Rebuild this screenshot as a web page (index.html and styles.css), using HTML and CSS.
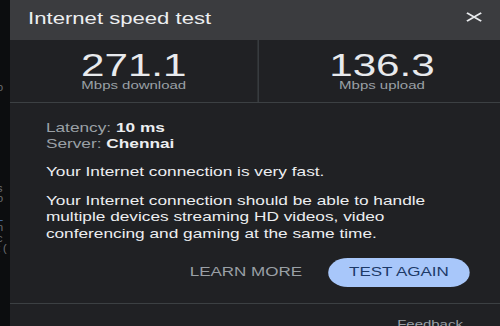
FILE: index.html
```html
<!DOCTYPE html>
<html lang="en">
<head>
<meta charset="utf-8">
<title>Internet speed test</title>
<link rel="stylesheet" href="styles.css">
</head>
<body>
<div class="page">
  <div class="backdrop">
    <span class="frag g1">o</span>
    <span class="frag g2">s</span>
    <span class="frag">o</span>
    <span class="frag link g3">L</span>
    <span class="frag">n</span>
    <span class="frag">c</span>
    <span class="frag">t (</span>
  </div>
  <section class="dialog">
    <header class="dlg-head">
      <h1 class="title">Internet speed test</h1>
      <button class="close" aria-label="Close">
        <svg viewBox="0 0 12.5 10" width="12.5" height="10" preserveAspectRatio="none"><path d="M1 0.8 L11.5 9.2 M11.5 0.8 L1 9.2" stroke="#e8eaed" stroke-width="1.5" fill="none"/></svg>
      </button>
    </header>
    <div class="stats">
      <div class="stat">
        <div class="num">271.1</div>
        <div class="unit">Mbps download</div>
      </div>
      <div class="stat">
        <div class="num">136.3</div>
        <div class="unit">Mbps upload</div>
      </div>
    </div>
    <div class="content">
      <div class="meta">
        <div><span class="k">Latency:</span> <b>10 ms</b></div>
        <div><span class="k">Server:</span> <b>Chennai</b></div>
      </div>
      <p class="verdict">Your Internet connection is very fast.</p>
      <p class="detail">Your Internet connection should be able to handle multiple devices streaming HD videos, video conferencing and gaming at the same time.</p>
      <div class="actions">
        <button class="btn-text">LEARN MORE</button>
        <button class="btn-pill">TEST AGAIN</button>
      </div>
    </div>
    <footer class="foot"><span class="feedback">Feedback</span></footer>
  </section>
</div>
</body>
</html>
```
FILE: styles.css
```css
html, body {
  margin: 0;
  height: 326px;
  overflow: hidden;
  background: #0c0d0f;
}
body {
  font-family: "Liberation Sans", Arial, sans-serif;
}
.page {
  display: flex;
  height: 326px;
}
.backdrop {
  width: 10px;
  flex: none;
  overflow: hidden;
  display: flex;
  flex-direction: column;
}
.frag {
  display: block;
  font-size: 11px;
  line-height: 10.5px;
  margin-left: -3px;
  color: #6c7075;
}
.frag.g1 { margin-top: 82px; }
.frag.g2 { margin-top: 90px; }
.frag.g3 { margin-top: 8px; }
.frag.link { color: #4f7cbf; }

.dialog {
  flex: none;
  width: 364px;
  height: 326px;
  overflow: hidden;
  background: #202124;
  transform: scaleX(1.36);
  transform-origin: 0 0;
}
.dlg-head {
  height: 40px;
  box-sizing: border-box;
  background: #3b3c3f;
  display: flex;
  align-items: flex-start;
  justify-content: space-between;
  padding: 0 17px 0 13.3px;
}
.title {
  margin: 0;
  padding-top: 8px;
  font-size: 16.25px;
  line-height: 20px;
  font-weight: 400;
  color: #eceef0;
}
.close {
  margin-top: 11.7px;
  width: 12.5px;
  height: 10px;
  padding: 0;
  border: 0;
  background: none;
  display: block;
}
.close svg { display: block; }

.stats {
  display: grid;
  grid-template-columns: 1fr 1fr;
  border-bottom: 1px solid #3c4043;
}
.stat {
  text-align: center;
  padding: 13.3px 0 9.7px;
}
.stat + .stat {
  border-left: 1px solid #3c4043;
}
.num {
  font-size: 31px;
  line-height: 26px;
  color: #e8eaed;
}
.unit {
  font-size: 11px;
  line-height: 13px;
  color: #9aa0a6;
}

.content {
  padding: 16.9px 25.8px 0 26.4px;
  color: #eceef0;
  font-size: 12.7px;
}
.meta {
  line-height: 16px;
}
.k { color: #9aa0a6; }
.meta b { font-weight: 700; color: #eceef0; }
.verdict {
  margin: 12.3px 0 0;
  line-height: 16px;
}
.detail {
  margin: 12.7px 0 0;
  line-height: 16.6px;
}
.actions {
  display: flex;
  justify-content: flex-end;
  align-items: center;
  gap: 9px;
  margin-top: 15.2px;
}
.btn-text {
  padding: 0 10px;
  border: 0;
  background: none;
  color: #9aa0a6;
  font-family: "Liberation Sans", Arial, sans-serif;
  font-size: 12.5px;
  line-height: 1;
}
.btn-pill {
  height: 28.7px;
  padding: 0 15.5px;
  border: 0;
  border-radius: 14.35px;
  background: #a8c7fa;
  color: #1d3a68;
  font-family: "Liberation Sans", Arial, sans-serif;
  font-size: 12.5px;
  line-height: 1;
}
.foot {
  margin-top: 16px;
  border-top: 1px solid #3c4043;
  padding: 14px 31px 0 0;
  text-align: right;
  font-size: 11px;
  line-height: 13px;
  color: #9aa0a6;
}
```
